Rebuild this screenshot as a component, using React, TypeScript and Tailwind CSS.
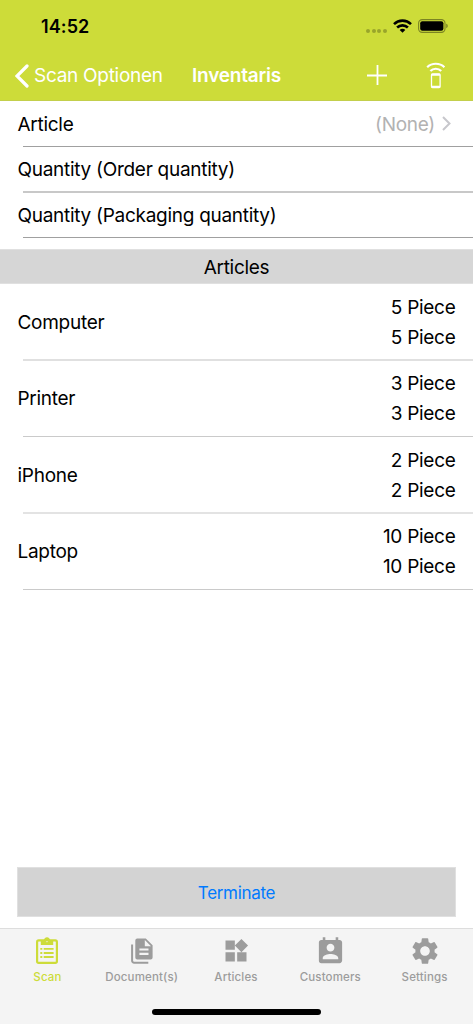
import { MdPermContactCalendar, MdSettings, MdWidgets } from 'react-icons/md';

const fields = [
  { label: 'Article', value: '(None)', height: 'h-[45px]', line: 'h-px bg-[#a0a0a0]' },
  { label: 'Quantity (Order quantity)', height: 'h-[44px]', line: 'h-[2px] bg-[#c8c8c8]' },
  { label: 'Quantity (Packaging quantity)', height: 'h-[44px]', line: 'h-px bg-[#a0a0a0]' },
];

const articles = [
  { name: 'Computer', amount: '5 Piece', row: 'h-[75px] pt-[2px]', line: 'h-[2px] bg-[#e0e0e0]' },
  { name: 'Printer', amount: '3 Piece', row: 'h-[75px]', line: 'h-px bg-[#cacaca]' },
  { name: 'iPhone', amount: '2 Piece', row: 'h-[75px] pt-[2px]', line: 'h-[2px] bg-[#e3e3e3]' },
  { name: 'Laptop', amount: '10 Piece', row: 'h-[75px]', line: 'h-px bg-[#cacaca]' },
];

function WifiIcon() {
  return (
    <svg width="19" height="14" viewBox="0 0 19 14" fill="none" stroke="#000" strokeWidth="2.6">
      <path d="M1 5.1a12.2 12.2 0 0 1 17 0" />
      <path d="M4.1 8.5a7.8 7.8 0 0 1 10.8 0" />
      <path d="M9.5 13.8 6.7 11a3.8 3.8 0 0 1 5.6 0Z" fill="#000" stroke="none" />
    </svg>
  );
}

function BatteryIcon() {
  return (
    <svg width="31" height="14" viewBox="0 0 31 14">
      <rect x="0.6" y="0.6" width="26.4" height="12.8" rx="3.6" fill="none" stroke="#000" strokeOpacity=".4" strokeWidth="1.1" />
      <rect x="2.2" y="2.2" width="23.2" height="9.6" rx="2.1" />
      <path d="M28.3 4.8c1.8.5 1.8 3.9 0 4.4Z" fillOpacity=".45" />
    </svg>
  );
}

function ScannerIcon() {
  return (
    <svg width="20" height="27" viewBox="0 0 20 27" fill="none" stroke="#fff">
      <path d="M1.2 5.2C5.8.6 13.8.6 18.4 5.2" strokeWidth="2.2" />
      <path d="M4.4 9c2.8-3 8-3 10.8 0" strokeWidth="2.2" />
      <rect x="5.5" y="12" width="8.6" height="13.6" rx="1" strokeWidth="1.3" />
      <path d="M5.5 12.7h8.6M5.5 24.8h8.6" strokeWidth="2" />
    </svg>
  );
}

function ClipboardIcon() {
  return (
    <svg width="22" height="27" viewBox="0 0 22 27" fill="currentColor">
      <rect x="1.1" y="3.4" width="19.8" height="22.4" rx="1.6" fill="none" stroke="currentColor" strokeWidth="2.2" />
      <path
        fillRule="evenodd"
        d="M4.8 8V3.6h2.9C8 1.5 9.2.2 11 .2s3 1.3 3.3 3.4h2.9V8ZM11 2.9a1.2 1.2 0 1 0 0 2.4 1.2 1.2 0 0 0 0-2.4Z"
      />
      <path d="M4.3 11h2v1.8h-2zM7.7 11h9.9v1.8H7.7zM4.3 15.1h2v1.8h-2zM7.7 15.1h9.9v1.8H7.7zM4.3 19.1h2v1.8h-2zM7.7 19.1h9.9v1.8H7.7z" />
    </svg>
  );
}

function DocumentsIcon() {
  return (
    <svg width="22" height="26" viewBox="0 0 22 26" fill="currentColor">
      <path
        fillRule="evenodd"
        d="M6.3.5h8.5l6.8 6.7v12.2a2 2 0 0 1-2 2H6.3a2 2 0 0 1-2-2V2.5a2 2 0 0 1 2-2ZM13.8 2v6.2H20ZM8.4 10.4v2.1h9.1v-2.1ZM8.4 14.8v2.1h9.1v-2.1Z"
      />
      <path d="M1.1 6.6v16.1a2 2 0 0 0 2 2h14.2" fill="none" stroke="currentColor" strokeWidth="2" />
    </svg>
  );
}

const tabs = [
  { label: 'Scan', icon: <ClipboardIcon />, active: true },
  { label: 'Document(s)', icon: <DocumentsIcon /> },
  { label: 'Articles', icon: <MdWidgets size={28} /> },
  { label: 'Customers', icon: <MdPermContactCalendar size={31} className="mt-[2px]" /> },
  { label: 'Settings', icon: <MdSettings size={32} /> },
];

export default function App() {
  return (
    <div className="flex h-[1024px] w-[473px] flex-col overflow-hidden bg-white font-['Inter',sans-serif] text-[19px] leading-[30px] tracking-[-0.28px] text-black">
      <header className="h-[101px] shrink-0 border-b border-[#c3cf4c] bg-[#cddc39]">
        <div className="flex h-[52px] items-center justify-between pr-[24px] pl-[41px]">
          <span className="pt-[2px] text-[18px] font-semibold tracking-[0.1px]">14:52</span>
          <div className="flex items-center">
            <div className="mt-[9px] mr-[6px] flex gap-[1.7px]">
              {[0, 1, 2, 3].map((dot) => (
                <span key={dot} className="size-[4px] rounded-full bg-black/25" />
              ))}
            </div>
            <WifiIcon />
            <span className="w-[6px]" />
            <BatteryIcon />
          </div>
        </div>
        <div className="flex h-[48px] items-center pl-[15px] text-white">
          <svg width="14" height="24" viewBox="0 0 14 24" fill="none" stroke="#fff" strokeWidth="3.2" strokeLinecap="round">
            <path d="M12 2 2 12l10 10" />
          </svg>
          <span className="ml-[5px] w-[158px] whitespace-nowrap">Scan Optionen</span>
          <span className="w-[175px] font-semibold tracking-[-0.2px]">Inventaris</span>
          <svg className="-mt-[2px]" width="20" height="20" viewBox="0 0 20 20" stroke="#fff" strokeWidth="1.8">
            <path d="M10.5 0v20M0 10.5h20" />
          </svg>
          <span className="w-[39px]" />
          <span className="-mt-[2px]">
            <ScannerIcon />
          </span>
        </div>
      </header>

      <main className="flex min-h-0 flex-1 flex-col">
        <section>
          {fields.map((field) => (
            <div key={field.label}>
              <div className={`flex items-center justify-between pt-[2px] pr-[22px] pl-[17.5px] ${field.height}`}>
                <span>{field.label}</span>
                {field.value && (
                  <span className="flex items-center gap-[7px] text-[#b2b2b2]">
                    {field.value}
                    <svg className="-mt-[2px]" width="9" height="15" viewBox="0 0 9 15" fill="none" stroke="#c7c7cc" strokeWidth="2">
                      <path d="m1 1 6.5 6.5L1 14" />
                    </svg>
                  </span>
                )}
              </div>
              <div className={`ml-[23px] ${field.line}`} />
            </div>
          ))}
        </section>

        <h2 className="mt-[11px] flex h-[35px] items-center justify-center border-y border-[#e0e0e0] bg-[#d6d6d6] pt-[2px]">
          Articles
        </h2>

        <ul>
          {articles.map((article) => (
            <li key={article.name}>
              <div className={`flex items-center justify-between px-[17.5px] ${article.row}`}>
                <span>{article.name}</span>
                <div className="text-right">
                  <p>{article.amount}</p>
                  <p>{article.amount}</p>
                </div>
              </div>
              <div className={`ml-[23px] ${article.line}`} />
            </li>
          ))}
        </ul>

        <button className="mx-[17px] mt-auto mb-[11px] h-[50px] shrink-0 border border-[#e0e0e0] bg-[#d3d3d3] pt-px text-[17px] tracking-[-0.3px] text-[#007aff]">
          Terminate
        </button>
      </main>

      <footer className="flex h-[96px] shrink-0 flex-col border-t border-[#dddddd] bg-[#f4f4f4]">
        <nav className="grid grid-cols-5 pr-[1.3px] pl-[0.3px]">
          {tabs.map((tab) => (
            <a
              key={tab.label}
              href="#"
              className={`flex flex-col items-center ${tab.active ? 'text-[#cddc39]' : 'text-[#9c9c9c]'}`}
            >
              <span className="mt-[6px] flex h-[31px] items-center">{tab.icon}</span>
              <span className="mt-[3px] text-[11.5px] leading-[16px] font-medium tracking-[0.15px]">{tab.label}</span>
            </a>
          ))}
        </nav>
        <div className="mx-auto mt-auto mb-[9px] h-[6px] w-[169px] rounded-full bg-black" />
      </footer>
    </div>
  );
}
